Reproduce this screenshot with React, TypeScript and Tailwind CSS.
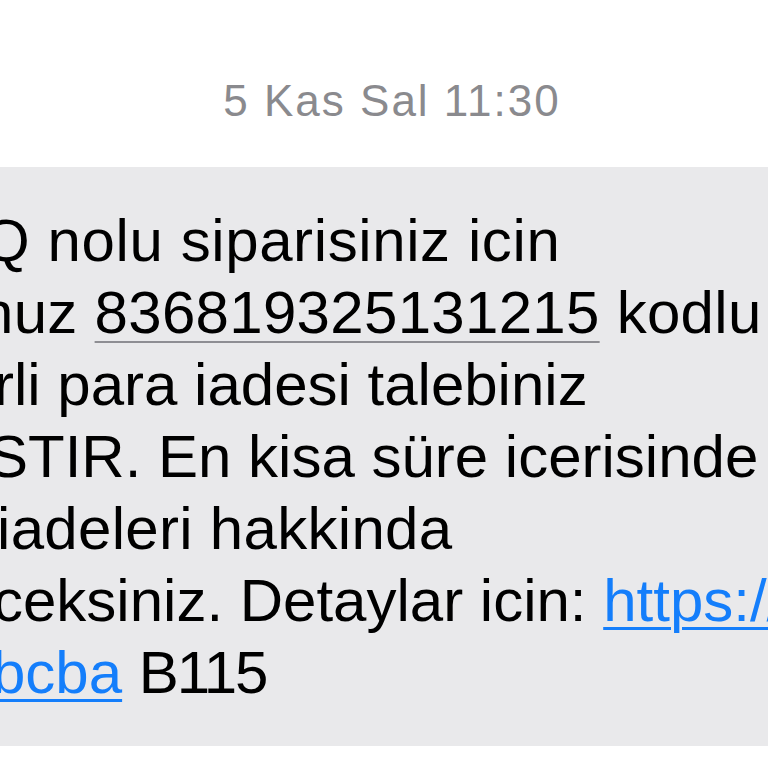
import React from 'react'

const font = { fontFamily: '"Liberation Sans", Arial, sans-serif' }

function Line({ offset, children }: { offset: string; children: React.ReactNode }) {
  return <div className={`whitespace-nowrap ${offset}`}>{children}</div>
}

export default function App() {
  return (
    <div className="h-[768px] w-[768px] overflow-hidden bg-white" style={font}>
      <div className="pl-[16px] pt-[79px] text-center text-[44px] leading-[44px] tracking-[2px] text-[#8a8a8e]">5 Kas Sal 11:30</div>
      <div className="mt-[44px] h-[579px] bg-[#e9e9eb] pt-[38px] text-[60px] leading-[72px] text-black">
        <Line offset="ml-[-17px] tracking-[0.6px]">Q nolu siparisiniz icin</Line>
        <Line offset="ml-[-20px] tracking-[0.3px]">
          nuz <span className="underline decoration-[#8e8e93] decoration-2 underline-offset-[8px]">836819325131215</span> kodlu
        </Line>
        <Line offset="ml-[-6px]">rli para iadesi talebiniz</Line>
        <Line offset="ml-[-12px]">STIR. En kisa süre icerisinde</Line>
        <Line offset="ml-[-3px] tracking-[0.3px]">iadeleri hakkinda</Line>
        <Line offset="ml-[-7px]">
          ceksiniz. Detaylar icin: <span className="text-[#147efb] underline decoration-[3px] underline-offset-[6px]">https://</span>
        </Line>
        <Line offset="ml-[-8px]">
          <span className="text-[#147efb] underline decoration-[3px] underline-offset-[6px]">bcba</span>{' '}
          <span className="tracking-[-2px]">B115</span>
        </Line>
      </div>
    </div>
  )
}
